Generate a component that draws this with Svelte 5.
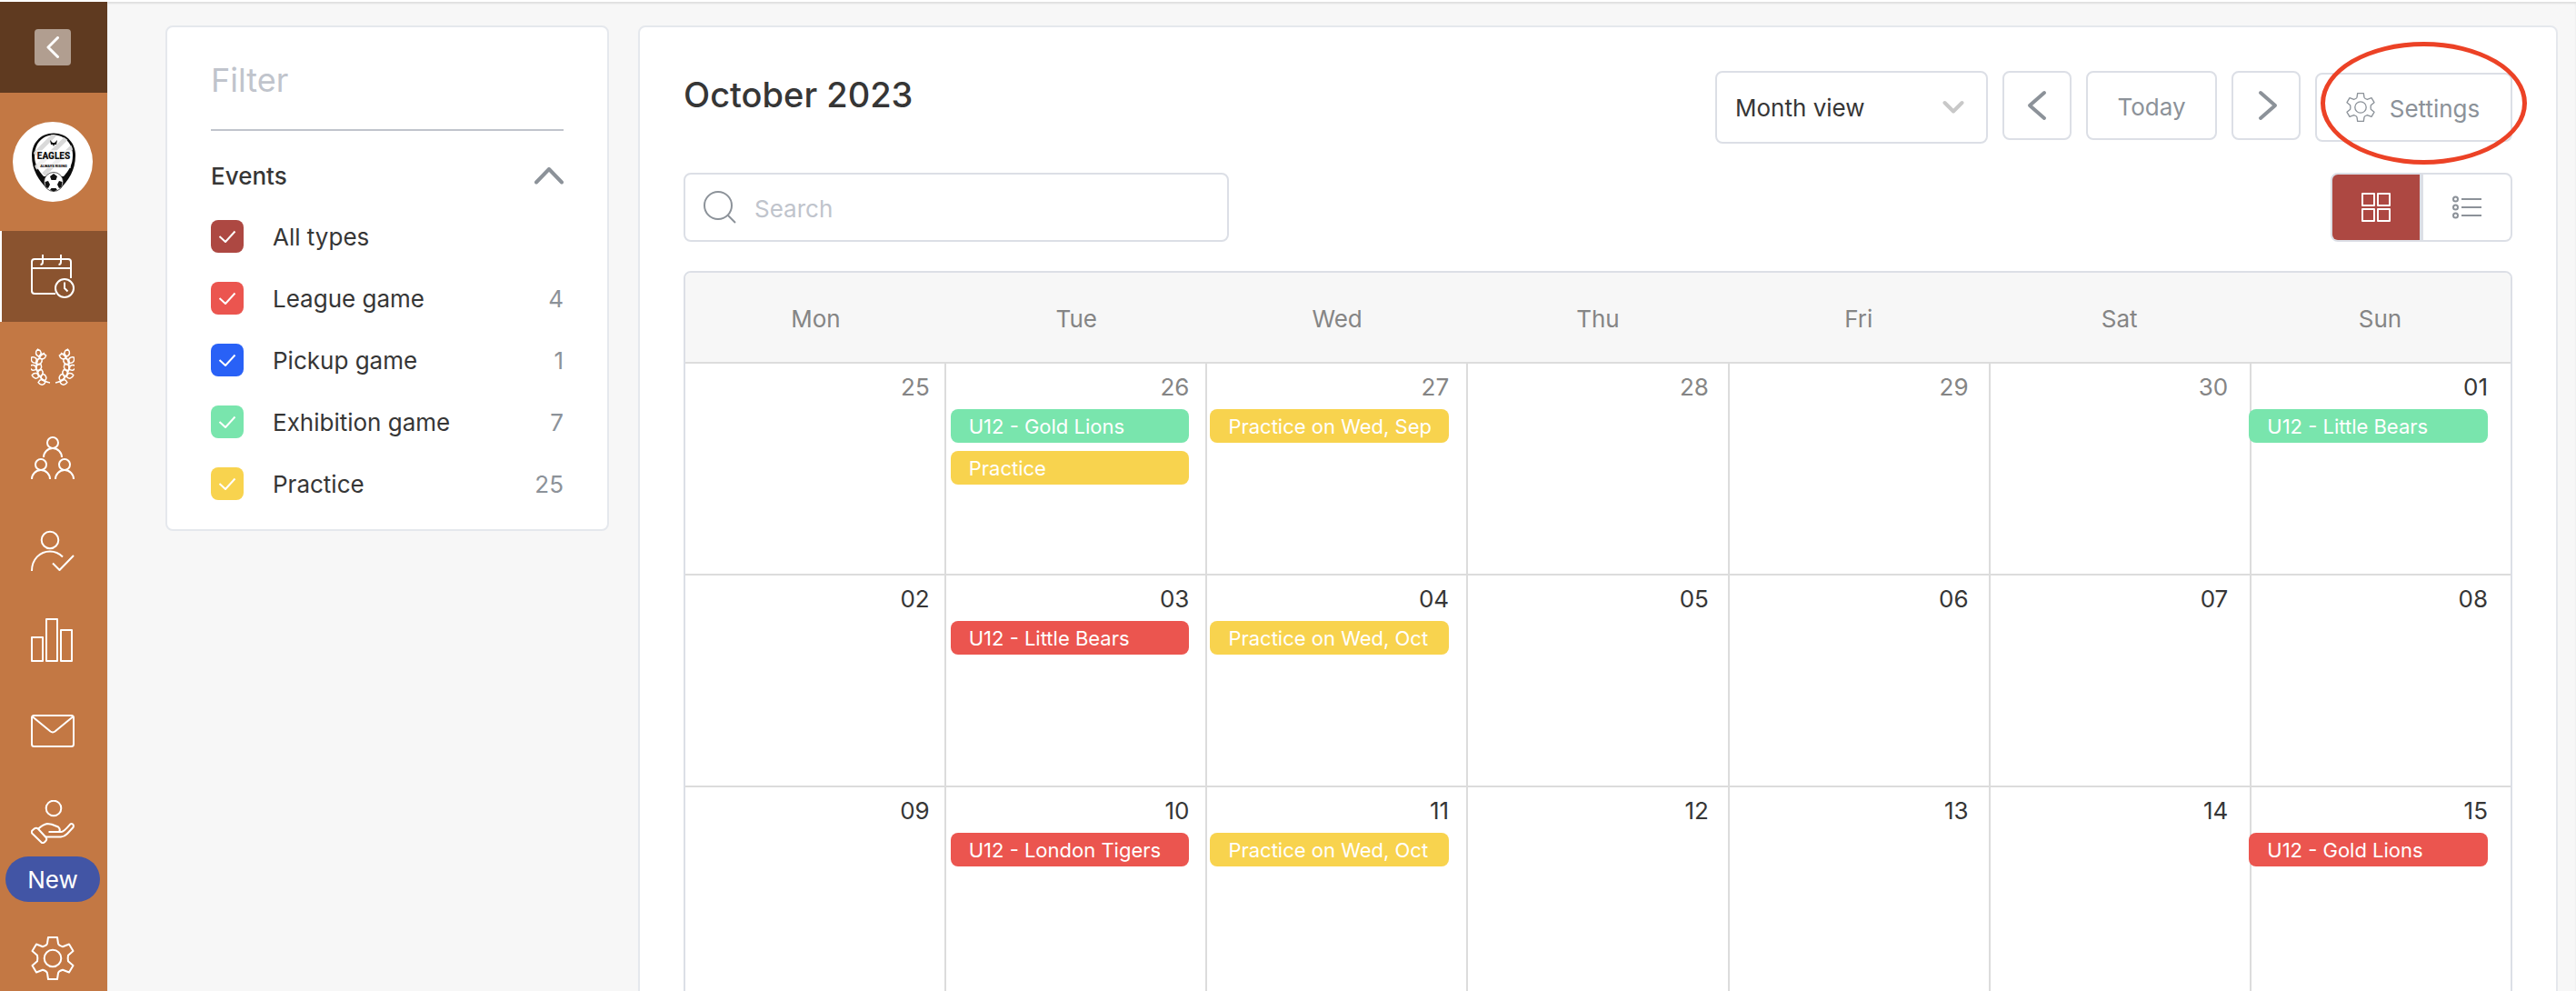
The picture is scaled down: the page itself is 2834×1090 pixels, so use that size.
<script>
  const filters = [
    { id: 'all', label: 'All types', color: 'all', count: '' },
    { id: 'league', label: 'League game', color: 'league', count: 4 },
    { id: 'pickup', label: 'Pickup game', color: 'pickup', count: 1 },
    { id: 'exhibition', label: 'Exhibition game', color: 'exhibition', count: 7 },
    { id: 'practice', label: 'Practice', color: 'practice', count: 25 }
  ];

  const weekdays = ['Mon', 'Tue', 'Wed', 'Thu', 'Fri', 'Sat', 'Sun'];

  const weeks = [
    [
      { day: '25', other: true },
      {
        day: '26',
        other: true,
        events: [
          { title: 'U12 - Gold Lions', type: 'exhibition' },
          { title: 'Practice', type: 'practice' }
        ]
      },
      { day: '27', other: true, events: [{ title: 'Practice on Wed, Sep', type: 'practice' }] },
      { day: '28', other: true },
      { day: '29', other: true },
      { day: '30', other: true },
      { day: '01', events: [{ title: 'U12 - Little Bears', type: 'exhibition' }] }
    ],
    [
      { day: '02' },
      { day: '03', events: [{ title: 'U12 - Little Bears', type: 'league' }] },
      { day: '04', events: [{ title: 'Practice on Wed, Oct', type: 'practice' }] },
      { day: '05' },
      { day: '06' },
      { day: '07' },
      { day: '08' }
    ],
    [
      { day: '09' },
      { day: '10', events: [{ title: 'U12 - London Tigers', type: 'league' }] },
      { day: '11', events: [{ title: 'Practice on Wed, Oct', type: 'practice' }] },
      { day: '12' },
      { day: '13' },
      { day: '14' },
      { day: '15', events: [{ title: 'U12 - Gold Lions', type: 'league' }] }
    ]
  ];

  // x, y and angle of every leaf on the left laurel branch
  const leaves = [
    [16, 35, -95], [15, 34, -15], [9, 29, -80], [9, 29, 20], [6, 21, -65],
    [6, 22, 40], [6, 14, -40], [6, 15, 50], [9, 7, -10], [9, 8, 75]
  ];
</script>

{#snippet gear()}
  <svg viewBox="0 0 48 48" aria-hidden="true">
    <path d="M19 1H29L30 7.7Q30.5 9.8 35 11.2L42 8.5L46.5 16L41 20.7Q40.3 24 41 27.3L46.5 32L42 39.5L35 36.8Q30.5 38.2 30 40.3L29 47H19L18 40.3Q17.5 38.2 13 36.8L6 39.5L1.5 32L7 27.3Q7.7 24 7 20.7L1.5 16L6 8.5L13 11.2Q17.5 9.8 18 7.7Z" />
    <circle cx="24" cy="24" r="9.3" />
  </svg>
{/snippet}

{#snippet branch()}
  <path d="M21 36Q9 34 6 20Q5 10 15 3" />
  {#each leaves as [x, y, angle]}
    <path d="M0 0C-4-2-3.5-6 0-8C3.5-6 4-2 0 0Z" transform="translate({x} {y}) rotate({angle})" />
  {/each}
{/snippet}

<div class="app">
  <div class="topline"></div>
  <div class="layout">
    <nav class="sidebar" aria-label="Main">
      <div class="collapse">
        <button class="collapse-btn" aria-label="Collapse menu">
          <svg viewBox="0 0 14 24" aria-hidden="true"><path d="M12.500 1.500L2 12l10.500 10.500" /></svg>
        </button>
      </div>
      <a class="club" href="#club" aria-label="Eagles">
        <svg viewBox="0 0 88 88">
          <clipPath id="shield"><path d="M45 14C31 14 23 25 23 38C23 55 32 66 45 75C58 66 67 55 67 38C67 25 59 14 45 14Z" /></clipPath>
          <path fill="#0c0c0c" d="M45 12.500C30 12.500 21 24 21 37C21 54 29 64 38 74H52C61 64 69 54 69 37C69 24 60 12.500 45 12.500Z" />
          <path fill="#fff" d="M45 14.500C32 14.500 24 25 24 37C24 48 29 54 34 60H56C61 54 66 48 66 37C66 25 58 14.500 45 14.500Z" />
          <g clip-path="url(#shield)" stroke="#d9d9d9" stroke-width="5">
            <path d="M24 36L46 14M25 51L60 17M34 58L66 27" />
          </g>
          <path fill="#fff" d="M26 31h38v20H27z" fill-opacity=".6" />
          <path fill="#111" d="M41 20l3 3h2l3-3-1 5h-2l-1 2-1-2h-2z" />
          <text class="club-name" x="45" y="41">EAGLES</text>
          <text class="club-motto" x="45" y="50">ALWAYS RISING</text>
          <circle cx="45" cy="66" r="10.500" fill="#fff" stroke="#333" stroke-width=".8" />
          <path fill="#111" d="M45 57l4 3-1.500 4h-5L41 60zM35.500 66l3.500-1 2 4-2 4-2.500-1zM54.500 66L51 65l-2 4 2 4 2.500-1zM41 75l1.500-2h5l1.500 2-4 1.500z" />
        </svg>
      </a>
      <a class="item active" href="#calendar" aria-label="Calendar">
        <svg viewBox="0 0 48 48" aria-hidden="true">
          <path d="M27 43H4a3 3 0 0 1-3-3V8a3 3 0 0 1 3-3h37a3 3 0 0 1 3 3v18M1 15h43M13 0v8q0 3-2.500 3M33 0v8q0 3-2.500 3" />
          <circle cx="37" cy="37" r="10" />
          <path d="M37 30.500V37l3.500 3.500" />
        </svg>
      </a>
      <a class="item" href="#competitions" aria-label="Competitions">
        <svg class="laurel" viewBox="0 -5 48 48" aria-hidden="true">
          <g>{@render branch()}</g>
          <g transform="translate(48 0) scale(-1 1)">{@render branch()}</g>
        </svg>
      </a>
      <a class="item" href="#teams" aria-label="Teams">
        <svg viewBox="0 0 48 48" aria-hidden="true">
          <circle cx="24" cy="7" r="6" />
          <circle cx="11" cy="31" r="6" />
          <circle cx="37" cy="31" r="6" />
          <path d="M14 23a10 10 0 0 1 20 0M1 47a10 10 0 0 1 20 0M27 47a10 10 0 0 1 20 0" />
        </svg>
      </a>
      <a class="item" href="#members" aria-label="Members">
        <svg viewBox="0 0 48 48" aria-hidden="true">
          <circle cx="21" cy="14" r="9.300" />
          <path d="M1 48C1 35 10 26.500 21 26.500q8 0 14 6M24 39.500l7.500 7.500L47 31" />
        </svg>
      </a>
      <a class="item" href="#stats" aria-label="Statistics">
        <svg viewBox="0 0 48 48" aria-hidden="true">
          <path d="M1 21h12v26H1zM17 1h12v46H17zM33 13h12v34H33z" />
        </svg>
      </a>
      <a class="item" href="#messages" aria-label="Messages">
        <svg viewBox="0 0 48 48" aria-hidden="true">
          <rect x="1" y="7" width="46" height="34" rx="2.500" />
          <path d="M2 8.500L21.500 24.500q2.500 1.800 5 0L46 8.500" />
        </svg>
      </a>
      <a class="item with-badge" href="#payments">
        <svg viewBox="0 0 48 48" aria-hidden="true">
          <circle cx="25" cy="9" r="8.300" />
          <path d="M1.500 33.500L4 31.300Q6 30 8 31.800L16.500 41Q18 43 16.500 44.700L15 46.300Q13 48 11.500 46.500L1.700 37Q0 35 1.500 33.500Z" />
          <path d="M8 31.800Q13 26.800 18 26L23 26.800L30 29.500Q33 32 31 35H19.500M31 35h2.500Q36 35 43 26.800Q44.500 25.500 46 26.500Q47.500 28 46.500 30L40 37Q37 40.200 33 40.500H16" />
        </svg>
        <span class="badge">New</span>
      </a>
      <a class="item" href="#settings" aria-label="Settings">{@render gear()}</a>
    </nav>

    <main class="page">
      <aside class="card filter">
        <h2 class="filter-title">Filter</h2>
        <div class="group-header">
          <h3>Events</h3>
          <button class="group-toggle" aria-label="Toggle events">
            <svg viewBox="0 0 32 20" aria-hidden="true"><path d="M2 16.500L16 2l14 14.500" /></svg>
          </button>
        </div>
        <ul class="types">
          {#each filters as filter (filter.id)}
            <li>
              <label for={filter.id}>
                <span class="check">
                  <input id={filter.id} class={filter.color} type="checkbox" checked />
                  <svg viewBox="0 0 36 36" aria-hidden="true"><path d="M9.500 18l6.500 6 10.500-11.500" /></svg>
                </span>
                <span>{filter.label}</span>
              </label>
              <span class="count">{filter.count}</span>
            </li>
          {/each}
        </ul>
      </aside>

      <section class="card calendar">
        <header class="toolbar">
          <h1>October 2023</h1>
          <div class="actions">
            <div class="view">
              <select aria-label="View">
                <option>Month view</option>
              </select>
              <svg viewBox="0 0 24 16" aria-hidden="true"><path d="M2.500 3L12 12.500 21.500 3" /></svg>
            </div>
            <button class="btn arrow" aria-label="Previous month">
              <svg viewBox="0 0 20 32" aria-hidden="true"><path d="M18 2L2 16l16 14" /></svg>
            </button>
            <button class="btn today"><span>Today</span></button>
            <button class="btn arrow" aria-label="Next month">
              <svg viewBox="0 0 20 32" aria-hidden="true"><path d="M4 2l16 14L4 30" /></svg>
            </button>
            <div class="highlight">
              <button class="btn settings">{@render gear()}<span>Settings</span></button>
            </div>
          </div>
        </header>

        <div class="tools">
          <div class="search">
            <svg viewBox="0 0 36 36" aria-hidden="true">
              <circle cx="16" cy="16" r="15" />
              <path d="M26.500 26.500l8.500 8.500" />
            </svg>
            <input type="search" placeholder="Search" aria-label="Search" />
          </div>
          <div class="layout-switch">
            <button class="on" aria-label="Grid">
              <svg viewBox="0 0 32 32" aria-hidden="true">
                <path d="M1 1h13v13H1zM18 1h13v13H18zM1 18h13v13H1zM18 18h13v13H18z" />
              </svg>
            </button>
            <button aria-label="List">
              <svg viewBox="0 0 32 32" aria-hidden="true">
                <circle cx="3.500" cy="7" r="2.500" />
                <circle cx="3.500" cy="16" r="2.500" />
                <circle cx="3.500" cy="25" r="2.500" />
                <path d="M10 7h22M10 16h22M10 25h22" />
              </svg>
            </button>
          </div>
        </div>

        <div class="month">
          <table>
            <thead>
              <tr>
                {#each weekdays as name}
                  <th scope="col">{name}</th>
                {/each}
              </tr>
            </thead>
            <tbody>
              {#each weeks as week}
                <tr>
                  <td colspan="7">
                    <div class="week">
                      <div class="lines" aria-hidden="true">
                        {#each weekdays as name (name)}
                          <span></span>
                        {/each}
                      </div>
                      <div class="days">
                        {#each week as cell}
                          <div class="day">
                            <span class="number" class:other={cell.other}>{cell.day}</span>
                            {#each cell.events ?? [] as event}
                              <a class="event {event.type}" href="#event">{event.title}</a>
                            {/each}
                          </div>
                        {/each}
                      </div>
                    </div>
                  </td>
                </tr>
              {/each}
            </tbody>
          </table>
        </div>
      </section>
    </main>
  </div>
</div>

<style>
  :global(body) {
    margin: 0;
    background: #f7f7f7;
  }

  .app {
    --border: #dcdfe6;
    --muted: #8c9299;
    --text: #363636;
    display: flex;
    flex-direction: column;
    height: 100vh;
    overflow: hidden;
    background: #f7f7f7;
    color: var(--text);
    font-family: Inter, 'Liberation Sans', sans-serif;
    font-size: 26px;
    line-height: 38px;
  }

  .app :global(*) {
    box-sizing: border-box;
  }

  button,
  input,
  select {
    font: inherit;
    color: inherit;
  }

  button {
    padding: 0;
    border: 0;
    background: none;
    cursor: pointer;
  }

  a {
    color: inherit;
    text-decoration: none;
  }

  h1,
  h2,
  h3,
  ul {
    margin: 0;
    padding: 0;
  }

  svg {
    display: block;
    fill: none;
    stroke: currentColor;
    stroke-width: 2;
    stroke-linejoin: round;
  }

  .topline {
    flex: none;
    height: 2px;
    background: #fff;
  }

  .layout {
    display: flex;
    flex: 1;
    min-height: 0;
  }

  /* Sidebar */
  .sidebar {
    flex: none;
    width: 118px;
    background: #c37844;
    color: #fff;
  }

  .collapse,
  .club,
  .item {
    display: flex;
    align-items: center;
    justify-content: center;
    height: 100px;
    padding-right: 2px;
  }

  .collapse {
    background: #5f3a20;
  }

  .collapse-btn {
    display: flex;
    align-items: center;
    justify-content: center;
    width: 40px;
    height: 40px;
    border-radius: 4px;
    background: #b19e90;
  }

  .collapse-btn svg {
    width: 14px;
    stroke-width: 3;
    stroke-linecap: round;
  }

  .club {
    height: 152px;
  }

  .club svg {
    width: 88px;
    height: 88px;
    border-radius: 50%;
    background: #fff;
    stroke: none;
  }

  .club-name,
  .club-motto {
    fill: #111;
    font-family: Roboto, sans-serif;
    font-weight: 900;
    text-anchor: middle;
  }

  .club-name {
    font-size: 10px;
  }

  .club-motto {
    font-size: 4px;
  }

  .item {
    flex-direction: column;
  }

  .item :global(svg) {
    width: 48px;
    height: 48px;
  }

  .item.active {
    background: #8a532f;
    box-shadow: inset 2px 0 #fff;
  }

  .item .laurel {
    stroke-width: 1.5;
  }

  .item.with-badge {
    justify-content: flex-start;
    gap: 14px;
    height: 150px;
    padding-top: 26px;
  }

  .badge {
    width: 104px;
    padding-top: 2px;
    border-radius: 25px;
    background: #4255a5;
    line-height: 48px;
    text-align: center;
  }

  /* Page */
  .page {
    display: flex;
    flex: 1;
    align-items: flex-start;
    gap: 32px;
    min-width: 0;
    padding: 26px 20px 26px 64px;
    box-shadow: inset 0 2px 2px #dfdfdf;
  }

  .card {
    border: 2px solid #e5e8ed;
    border-radius: 8px;
    background: #fff;
  }

  .filter {
    flex: none;
    width: 488px;
    padding: 32px 48px;
  }

  .filter-title {
    padding-bottom: 28px;
    border-bottom: 2px solid #c0c4cc;
    color: #c0c4cc;
    font-size: 36px;
    font-weight: 400;
    line-height: 52px;
  }

  .group-header {
    display: flex;
    align-items: center;
    justify-content: space-between;
    margin: 24px 0 22px;
    line-height: 52px;
  }

  .group-header h3 {
    font-size: 26px;
    font-weight: 500;
  }

  .group-toggle {
    color: var(--muted);
  }

  .group-toggle svg {
    width: 32px;
    stroke-width: 4;
    stroke-linecap: round;
  }

  .types {
    display: flex;
    flex-direction: column;
    gap: 32px;
    list-style: none;
  }

  .types li,
  .types label {
    display: flex;
    justify-content: space-between;
    height: 36px;
  }

  .types label {
    gap: 32px;
  }

  .check {
    position: relative;
    width: 36px;
    height: 36px;
  }

  .check input {
    display: block;
    width: 36px;
    height: 36px;
    margin: 0;
    border-radius: 8px;
    appearance: none;
  }

  .check svg {
    position: absolute;
    inset: 0;
    color: #fff;
    pointer-events: none;
  }

  .count {
    color: var(--muted);
  }

  .all {
    background: #ad4842;
  }

  .league {
    background: #eb554f;
  }

  .pickup {
    background: #2961f6;
  }

  .exhibition {
    background: #79e5ad;
  }

  .practice {
    background: #f8d34e;
  }

  /* Calendar */
  .calendar {
    flex: 1;
    min-width: 0;
    padding: 48px;
  }

  .toolbar {
    display: flex;
    align-items: flex-start;
    justify-content: space-between;
  }

  h1 {
    font-size: 38px;
    font-weight: 500;
    line-height: 52px;
  }

  .actions {
    display: flex;
    align-items: flex-start;
    gap: 16px;
  }

  .view {
    position: relative;
  }

  .view select {
    display: block;
    width: 300px;
    height: 80px;
    padding: 2px 20px 0;
    border: 2px solid var(--border);
    border-radius: 8px;
    background: #fff;
    appearance: none;
  }

  .view svg {
    position: absolute;
    top: 32px;
    right: 26px;
    width: 24px;
    color: #c8c8c8;
    stroke-width: 4;
    stroke-linecap: round;
    pointer-events: none;
  }

  .btn {
    display: flex;
    align-items: center;
    justify-content: center;
    height: 76px;
    border: 2px solid var(--border);
    border-radius: 8px;
    background: #fff;
    color: var(--muted);
  }

  .btn span {
    padding-top: 3px;
  }

  .arrow {
    width: 76px;
  }

  .arrow svg {
    overflow: visible;
    width: 20px;
    stroke-width: 4;
    stroke-linecap: round;
  }

  .today {
    width: 144px;
  }

  .settings {
    gap: 16px;
    width: 217px;
    padding-right: 2px;
  }

  .settings :global(svg) {
    width: 32px;
  }

  .highlight {
    position: relative;
    align-self: center;
  }

  .highlight::after {
    content: '';
    position: absolute;
    inset: -34px -16px -25px 6px;
    border: 5px solid #ec4226;
    border-radius: 50%;
    pointer-events: none;
  }

  .tools {
    display: flex;
    justify-content: space-between;
    margin: 32px 0;
  }

  .search {
    display: flex;
    align-items: center;
    gap: 20px;
    width: 600px;
    height: 76px;
    padding: 0 20px;
    border: 2px solid var(--border);
    border-radius: 8px;
  }

  .search svg {
    flex: none;
    width: 36px;
    color: var(--muted);
  }

  .search input {
    flex: 1;
    min-width: 0;
    padding: 3px 0 0;
    border: 0;
    outline: 0;
    background: none;
  }

  .search input::placeholder {
    color: #c0c4cc;
    opacity: 1;
  }

  .layout-switch {
    display: flex;
    gap: 4px;
    width: 200px;
    height: 76px;
    overflow: hidden;
    border: 2px solid var(--border);
    border-radius: 8px;
    background: var(--border);
  }

  .layout-switch button {
    display: flex;
    flex: 1;
    align-items: center;
    justify-content: center;
    background: #fff;
    color: var(--muted);
  }

  .layout-switch .on {
    background: #ad4842;
    color: #fff;
  }

  .layout-switch svg {
    width: 32px;
  }

  .month {
    overflow: hidden;
    border: 2px solid var(--border);
    border-radius: 8px;
  }

  table {
    width: 100%;
    border-collapse: collapse;
    table-layout: fixed;
  }

  th {
    height: 98px;
    padding: 3px 0 0;
    background: #f7f7f7;
    color: #858585;
    font-weight: 400;
  }

  td {
    padding: 0;
  }

  .week {
    position: relative;
    height: 233px;
    border-top: 2px solid #dcdcdc;
  }

  /* runs under the table's right border, so the last column closes on it */
  .lines {
    position: absolute;
    inset: 0 -2px 0 0;
    display: grid;
    grid-template-columns: repeat(7, 1fr);
  }

  .lines span:not(:last-child) {
    border-right: 2px solid #dcdcdc;
  }

  .days {
    position: relative;
    display: grid;
    grid-template-columns: repeat(7, 1fr);
    margin-right: 8px;
  }

  .day {
    display: flex;
    flex-direction: column;
    gap: 9px;
    min-width: 0;
    padding: 11px 17px 0 6px;
  }

  .number {
    line-height: 30px;
    text-align: right;
  }

  .number.other {
    color: #858585;
  }

  .event {
    overflow: hidden;
    height: 37px;
    padding-left: 20px;
    border-radius: 8px;
    color: #fff;
    font-size: 22px;
    line-height: 39px;
    white-space: nowrap;
  }
</style>
